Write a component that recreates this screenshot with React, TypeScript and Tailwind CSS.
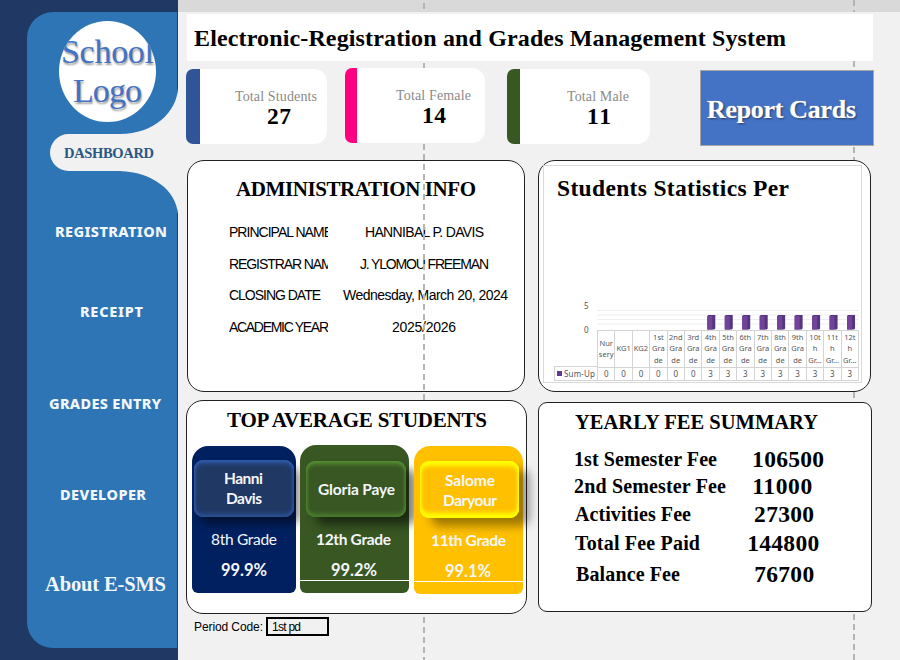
import { useLayoutEffect, useRef } from "react";

const SERIF = "font-['Liberation_Serif',serif]";
const SANS = "font-['Liberation_Sans',sans-serif]";
const LATO = "font-['Lato',sans-serif]";
const NOTO = "font-['Noto_Sans',sans-serif]";

/* One line of text whose tracking is adjusted so that it spans `w` pixels. */
function Fit({ text, w, className = "" }: { text: string; w: number; className?: string }) {
  const ref = useRef<HTMLSpanElement>(null);
  useLayoutEffect(() => {
    const el = ref.current;
    if (!el || text.length < 2) return;
    el.style.letterSpacing = "0px";
    const natural = el.getBoundingClientRect().width;
    el.style.letterSpacing = `${(w - natural) / (text.length - 1)}px`;
  }, [text, w]);
  return (
    <div className={`whitespace-nowrap ${className}`}>
      <span ref={ref}>{text}</span>
    </div>
  );
}

function PageBreak({ className }: { className: string }) {
  return (
    <div
      className={`pointer-events-none absolute w-[1.5px] bg-[repeating-linear-gradient(to_bottom,#b4b4b4_0px,#b4b4b4_6px,transparent_6px,transparent_10px)] ${className}`}
    />
  );
}

function Sidebar() {
  return (
    <aside className="h-[660px] w-[178px] shrink-0 bg-[#203864] pt-3 pl-[27px]">
      <div className="relative h-[636px] w-[150px] rounded-l-[26px] bg-[#2e75b6]">
        <svg className="absolute top-0 left-0" width="151" height="210" viewBox="27 12 151 210">
          <path
            d="M178 88C177 112 154 134 120 134H68.500A18.500 18.500 0 0 0 68.500 171H120C152 172 176 190 178 214Z"
            fill="#f1f1f1"
          />
        </svg>
        <div className="relative flex flex-col">
          <div className={`mt-[9px] ml-[32px] h-[101px] w-[97px] overflow-hidden rounded-[50%] bg-white pt-[12px] text-[34px] text-[#4472c4] [text-shadow:1px_2px_2px_#9a9a9a] ${SERIF}`}>
            <Fit text="School" w={93} className="ml-[2px] h-[39px] leading-[38px]" />
            <Fit text="Logo" w={69} className="ml-[14px] h-[39px] leading-[38px]" />
          </div>
          <Fit text="DASHBOARD" w={90} className={`mt-[20px] ml-[37px] text-[14.500px] leading-[22px] font-bold text-[#2b5785] ${SERIF}`} />
          <Fit text="REGISTRATION" w={112} className={`mt-[56px] ml-[28px] text-[14.500px] leading-[22px] font-extrabold text-[#f2f7fc] ${NOTO}`} />
          <Fit text="RECEIPT" w={63} className={`mt-[58px] ml-[53px] text-[14.500px] leading-[22px] font-extrabold text-[#f2f7fc] ${NOTO}`} />
          <Fit text="GRADES ENTRY" w={112} className={`mt-[70px] ml-[22px] text-[14.500px] leading-[22px] font-extrabold text-[#f2f7fc] ${NOTO}`} />
          <Fit text="DEVELOPER" w={86} className={`mt-[69px] ml-[33px] text-[14.500px] leading-[22px] font-extrabold text-[#f2f7fc] ${NOTO}`} />
          <Fit text="About E-SMS" w={121} className={`mt-[67px] ml-[18px] text-[20.500px] leading-[24px] font-bold text-[#f2f7fc] ${SERIF}`} />
        </div>
      </div>
    </aside>
  );
}

type StatProps = { label: string; lw: number; value: string; box: string; stripe: string; labelPos: string; valuePos: string };

function Stat({ label, lw, value, box, stripe, labelPos, valuePos }: StatProps) {
  return (
    <div className={`flex h-[75px] shrink-0 overflow-hidden rounded-l-[7px] rounded-r-[13px] bg-white ${box}`}>
      <div className={`shrink-0 ${stripe}`} />
      <div className={`pt-[20px] ${SERIF}`}>
        <Fit text={label} w={lw} className={`text-[14px] leading-[16px] text-[#8a8a8a] ${labelPos}`} />
        <Fit text={value} w={24} className={`-mt-px text-[23.500px] leading-[24px] font-bold text-black ${valuePos}`} />
      </div>
    </div>
  );
}

const adminRows = [
  { label: "PRINCIPAL NAME", lw: 104, value: "HANNIBAL P. DAVIS", vw: 119, pos: "ml-[37px]" },
  { label: "REGISTRAR NAME", lw: 112, value: "J. YLOMOU FREEMAN", vw: 129, pos: "ml-[32px]" },
  { label: "CLOSING DATE", lw: 92, value: "Wednesday, March 20, 2024", vw: 165, pos: "ml-[15px]" },
  { label: "ACADEMIC YEAR", lw: 100, value: "2025/2026", vw: 64, pos: "ml-[64px]" },
];

function AdminPanel() {
  return (
    <section className="h-[232px] w-[338px] rounded-[17px] border-[1.5px] border-[#222] bg-white">
      <Fit text="ADMINISTRATION INFO" w={240} className={`mt-[16px] ml-[48px] text-[21px] leading-[24px] font-bold ${SERIF}`} />
      <div className={`mt-[16px] ml-[41px] text-[14px] text-black ${SANS}`}>
        {adminRows.map((r) => (
          <div key={r.label} className="flex h-[31.500px] items-center">
            <div className="w-[99px] shrink-0 overflow-hidden">
              <Fit text={r.label} w={r.lw} />
            </div>
            <Fit text={r.value} w={r.vw} className={r.pos} />
          </div>
        ))}
      </div>
    </section>
  );
}

const grades: { lines: string[]; count: number }[] = [
  { lines: ["Nur", "sery"], count: 0 },
  { lines: ["KG1"], count: 0 },
  { lines: ["KG2"], count: 0 },
  { lines: ["1st", "Gra", "de"], count: 0 },
  { lines: ["2nd", "Gra", "de"], count: 0 },
  { lines: ["3rd", "Gra", "de"], count: 0 },
  { lines: ["4th", "Gra", "de"], count: 3 },
  { lines: ["5th", "Gra", "de"], count: 3 },
  { lines: ["6th", "Gra", "de"], count: 3 },
  { lines: ["7th", "Gra", "de"], count: 3 },
  { lines: ["8th", "Gra", "de"], count: 3 },
  { lines: ["9th", "Gra", "de"], count: 3 },
  { lines: ["10t", "h", "Gr..."], count: 3 },
  { lines: ["11t", "h", "Gr..."], count: 3 },
  { lines: ["12t", "h", "Gr..."], count: 3 },
];

function ChartPanel() {
  return (
    <section className="h-[232px] w-[333px] rounded-[17px] border-[1.500px] border-[#222] bg-white pt-[4px] pl-[4px]">
      <div className="flex h-[218px] w-[319px] flex-col border border-[#d9d9d9]">
        <Fit text="Students Statistics Per" w={232} className={`mt-[9px] ml-[13px] text-[23.500px] leading-[26px] font-bold ${SERIF}`} />
        <div className={`mt-[100px] ml-[10px] flex text-[8px] text-[#555] ${NOTO}`}>
          <div className="w-[43px] shrink-0">
            <div className="flex h-[29px] flex-col justify-between pl-[30px] leading-[10px]">
              <span>5</span>
              <span className="translate-y-[5px]">0</span>
            </div>
            <div className="h-[36px]" />
            <div className="flex h-[15px] items-center gap-[2px] border border-r-0 border-[#d4d4d4] pl-[2px] text-[8px]">
              <span className="size-[5px] shrink-0 bg-[#5f3c91]" />
              <Fit text="Sum-Up" w={31} />
            </div>
          </div>
          <div className="w-[262px]">
            <svg width="262" height="29" viewBox="0 0 262 29" className="block">
              {[9.5, 14, 18.5, 23].map((y) => (
                <path key={y} d={`M0 ${y}H262`} stroke="#eeeeee" />
              ))}
              {grades.map((g, i) =>
                g.count ? (
                  <g key={i}>
                    <path d={`M${i * 17.467 + 5.5} 15l1 -1h7v13.500l-1 1h-7z`} fill="#55377f" />
                    <path d={`M${i * 17.467 + 5.5} 15h5v13.500h-5z`} fill="#73429a" />
                  </g>
                ) : null,
              )}
            </svg>
            <div className="grid grid-cols-15 border-t border-l border-[#d4d4d4]">
              {grades.map((g, i) => (
                <div key={i} className="flex h-[36px] flex-col items-center justify-center overflow-hidden border-r border-[#d4d4d4] text-[7.500px] leading-[11.500px]">
                  {g.lines.map((l) => (
                    <span key={l}>{l}</span>
                  ))}
                </div>
              ))}
              {grades.map((g, i) => (
                <div key={i} className="h-[14px] border-t border-r border-b border-[#d4d4d4] text-center text-[8px] leading-[12px]">
                  {g.count}
                </div>
              ))}
            </div>
          </div>
        </div>
      </div>
    </section>
  );
}

function TopStudents() {
  return (
    <section className="h-[214px] w-[341px] rounded-[17px] border-[1.500px] border-[#222] bg-white">
      <Fit text="TOP AVERAGE STUDENTS" w={260} className={`mt-[7px] ml-[40px] text-[21px] leading-[24px] font-bold ${SERIF}`} />
      <div className={`mt-[13px] ml-[5px] flex items-start text-[15.500px] text-[#f4f6fa] ${LATO}`}>
        <article className="mt-px h-[147px] w-[104px] rounded-t-[16px] rounded-b-[6px] bg-[#002060] pt-[14px] pl-[2px]">
          <div className="flex h-[57px] w-[100px] flex-col rounded-[9px] bg-[#203864] pt-[8px] font-bold shadow-[6px_7px_8px_rgba(0,0,0,0.45),inset_0_3px_4px_#2f5cae,inset_0_-3px_4px_#2d5096,inset_1px_0_3px_#2a4983,inset_-1px_0_3px_#2a4983]">
            <Fit text="Hanni" w={39} className="ml-[30px] leading-[20px]" />
            <Fit text="Davis" w={36} className="ml-[32px] leading-[20px]" />
          </div>
          <Fit text="8th Grade" w={66} className="mt-[12px] ml-[17px] leading-[20px]" />
          <Fit text="99.9%" w={46} className="mt-[11px] ml-[27px] text-[16.500px] leading-[20px] font-bold" />
        </article>
        <article className="ml-[4px] h-[148px] w-[109px] rounded-t-[16px] rounded-b-[6px] bg-[#385723] pt-[16px]">
          <div className="ml-[6px] flex h-[56px] w-[100px] flex-col rounded-[9px] bg-[#385723] pt-[18px] font-bold shadow-[10px_8px_10px_rgba(0,0,0,0.5),inset_0_3px_4px_#579033,inset_0_-3px_4px_#4c7d2f,inset_1px_0_3px_#426a27,inset_-1px_0_3px_#426a27]">
            <Fit text="Gloria Paye" w={77} className="ml-[12px] leading-[20px]" />
          </div>
          <Fit text="12th Grade" w={75} className="mt-[12px] ml-[16px] leading-[20px] font-bold" />
          <Fit text="99.2%" w={46} className="mt-[11px] ml-[31px] text-[16.500px] leading-[20px] font-bold" />
          <div className="h-px bg-white" />
        </article>
        <article className="mt-px ml-[5px] h-[148px] w-[109px] rounded-t-[16px] rounded-b-[6px] bg-[#ffc000] pt-[15px]">
          <div className="ml-[6px] flex h-[57px] w-[99px] flex-col rounded-[9px] bg-[#ffc000] pt-[9px] font-bold shadow-[11px_8px_10px_rgba(0,0,0,0.38),inset_0_5px_4px_#ffff00,inset_0_-5px_4px_#ffff00,inset_1px_0_3px_#ffe500,inset_-1px_0_3px_#ffe500]">
            <Fit text="Salome" w={50} className="ml-[25px] leading-[20px]" />
            <Fit text="Daryour" w={54} className="ml-[23px] leading-[20px]" />
          </div>
          <Fit text="11th Grade" w={75} className="mt-[12px] ml-[17px] leading-[20px] font-bold" />
          <Fit text="99.1%" w={46} className="mt-[11px] ml-[31px] text-[16.500px] leading-[20px] font-bold" />
          <div className="h-px bg-white" />
        </article>
      </div>
    </section>
  );
}

const fees = [
  { label: "1st Semester Fee", lw: 143, value: "106500", vw: 72, lpos: "ml-[35px]", vpos: "ml-[35px]", h: "h-[27px]" },
  { label: "2nd Semester Fee", lw: 152, value: "11000", vw: 60, lpos: "ml-[35px]", vpos: "ml-[26px]", h: "h-[28px]" },
  { label: "Activities Fee", lw: 116, value: "27300", vw: 60, lpos: "ml-[36px]", vpos: "ml-[63px]", h: "h-[29px]" },
  { label: "Total Fee Paid", lw: 125, value: "144800", vw: 72, lpos: "ml-[36px]", vpos: "ml-[47px]", h: "h-[31px]" },
  { label: "Balance Fee", lw: 104, value: "76700", vw: 60, lpos: "ml-[37px]", vpos: "ml-[74px]", h: "h-[30px]" },
];

function FeePanel() {
  return (
    <section className={`h-[210px] w-[334px] rounded-[9px] border-[1.500px] border-[#222] bg-white font-bold ${SERIF}`}>
      <Fit text="YEARLY FEE SUMMARY" w={243} className="mt-[7px] ml-[36px] text-[20.500px] leading-[24px]" />
      <div className="mt-[12px]">
        {fees.map((f) => (
          <div key={f.label} className={`flex ${f.h} items-start`}>
            <Fit text={f.label} w={f.lw} className={`text-[20px] leading-[27px] ${f.lpos}`} />
            <Fit text={f.value} w={f.vw} className={`text-[23.500px] leading-[26px] ${f.vpos}`} />
          </div>
        ))}
      </div>
    </section>
  );
}

export default function App() {
  return (
    <div className="relative flex h-[660px] w-[900px] overflow-hidden bg-[#f1f1f1] text-black">
      <Sidebar />
      <main className="flex w-[722px] flex-col">
        <div className="h-[12px] shrink-0 bg-[#d9d9d9]" />
        <header className="mt-[2px] ml-[9px] h-[47px] w-[686px] shrink-0 bg-white pt-[10px] pl-[7px]">
          <Fit text="Electronic-Registration and Grades Management System" w={592} className={`text-[24px] leading-[28px] font-bold ${SERIF}`} />
        </header>
        <div className="mt-[7px] ml-[8px] flex h-[78px] shrink-0">
          <Stat label="Total Students" lw={82} value="27" box="mt-px w-[141px]" stripe="w-[14px] bg-[#2f5597]" labelPos="ml-[35px]" valuePos="ml-[67px]" />
          <Stat label="Total Female" lw={75} value="14" box="ml-[18px] w-[140px]" stripe="w-[12px] bg-[#ff0080]" labelPos="ml-[39px]" valuePos="ml-[65px]" />
          <Stat label="Total Male" lw={62} value="11" box="mt-px ml-[22px] w-[143px]" stripe="w-[13px] bg-[#385723]" labelPos="ml-[47px]" valuePos="ml-[67px]" />
          <button className="mt-[2px] ml-[50px] h-[76px] w-[174px] shrink-0 border border-[#a6a6a6] bg-[#4472c4] pt-[3px] pl-[6px] text-left text-white">
            <Fit text="Report Cards" w={149} className={`text-[26px] leading-[28px] font-bold [text-shadow:1px_1px_2px_#203864,0_0_1px_#ffffff] ${SERIF}`} />
          </button>
        </div>
        <div className="mt-[14px] ml-[9px] flex shrink-0 gap-[13px]">
          <AdminPanel />
          <ChartPanel />
        </div>
        <div className="mt-[8px] ml-[8px] flex shrink-0 gap-[11px]">
          <TopStudents />
          <div className="mt-[2px]">
            <FeePanel />
          </div>
        </div>
        <div className={`mt-[3px] ml-[16px] flex h-[19px] shrink-0 items-center text-[12px] ${SANS}`}>
          <Fit text="Period Code:" w={69} className="w-[72px]" />
          <div className="flex h-[19px] w-[63px] items-center border-2 border-black pl-[4px]">
            <Fit text="1st pd" w={29} />
          </div>
        </div>
      </main>

      {/* Print-area page breaks of the worksheet */}
      <PageBreak className="top-[3px] left-[423px] h-[9px]" />
      <PageBreak className="top-[63px] left-[423px] h-[5px]" />
      <PageBreak className="top-[144px] left-[423px] h-[257px]" />
      <PageBreak className="top-[617px] left-[423px] h-[43px]" />
      <PageBreak className="top-0 left-[853px] h-[12px]" />
      <PageBreak className="top-[61px] left-[853px] h-[9px]" />
      <PageBreak className="top-[147px] left-[853px] h-[13px]" />
      <PageBreak className="top-[392px] left-[853px] h-[10px]" />
      <PageBreak className="top-[614px] left-[853px] h-[46px]" />
    </div>
  );
}
